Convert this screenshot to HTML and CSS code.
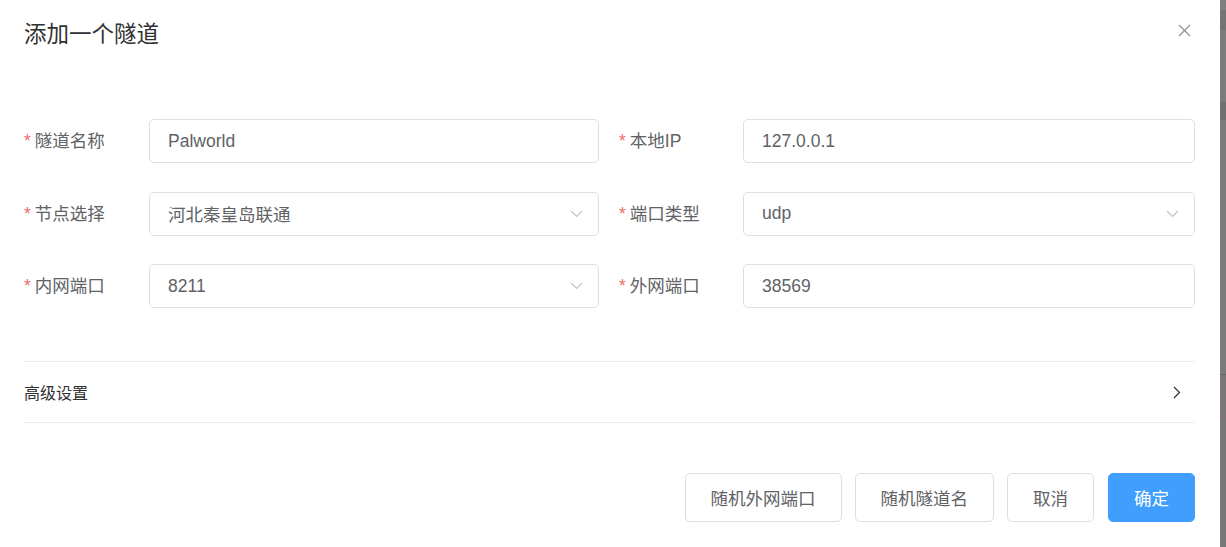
FILE: index.html
```html
<!DOCTYPE html>
<html lang="zh-CN">
<head>
<meta charset="utf-8">
<title>添加一个隧道</title>
<link rel="stylesheet" href="styles.css">
</head>
<body>
<div class="screen">
  <div class="dialog">
    <div class="dialog-header">
      <span class="dialog-title">添加一个隧道</span>
      <button class="close" aria-label="关闭">
        <svg width="13" height="13" viewBox="0 0 13 13"><path d="M1 1L12 12M12 1L1 12" stroke="#909399" stroke-width="1.3" fill="none"/></svg>
      </button>
    </div>
    <div class="dialog-body">
      <div class="form-grid">
        <div class="form-item">
          <label class="label"><span class="req">*</span>隧道名称</label>
          <div class="input"><span class="value">Palworld</span></div>
        </div>
        <div class="form-item">
          <label class="label"><span class="req">*</span>本地IP</label>
          <div class="input"><span class="value">127.0.0.1</span></div>
        </div>
        <div class="form-item">
          <label class="label"><span class="req">*</span>节点选择</label>
          <div class="input select"><span class="value">河北秦皇岛联通</span>
            <svg class="arrow" width="13" height="8" viewBox="0 0 13 8"><path d="M1 1L6.5 6.5L12 1" stroke="#c0c4cc" stroke-width="1.2" fill="none"/></svg>
          </div>
        </div>
        <div class="form-item">
          <label class="label"><span class="req">*</span>端口类型</label>
          <div class="input select"><span class="value">udp</span>
            <svg class="arrow" width="13" height="8" viewBox="0 0 13 8"><path d="M1 1L6.5 6.5L12 1" stroke="#c0c4cc" stroke-width="1.2" fill="none"/></svg>
          </div>
        </div>
        <div class="form-item">
          <label class="label"><span class="req">*</span>内网端口</label>
          <div class="input select"><span class="value">8211</span>
            <svg class="arrow" width="13" height="8" viewBox="0 0 13 8"><path d="M1 1L6.5 6.5L12 1" stroke="#c0c4cc" stroke-width="1.2" fill="none"/></svg>
          </div>
        </div>
        <div class="form-item">
          <label class="label"><span class="req">*</span>外网端口</label>
          <div class="input"><span class="value">38569</span></div>
        </div>
      </div>
      <div class="collapse">
        <div class="collapse-head">
          <span>高级设置</span>
          <svg width="8" height="13" viewBox="0 0 8 13"><path d="M1 1L6.5 6.5L1 12" stroke="#303133" stroke-width="1.2" fill="none"/></svg>
        </div>
      </div>
    </div>
    <div class="dialog-footer">
      <button class="btn">随机外网端口</button>
      <button class="btn">随机隧道名</button>
      <button class="btn">取消</button>
      <button class="btn primary">确定</button>
    </div>
  </div>
  <div class="backdrop">
    <div class="seg s1"></div>
    <div class="seg s2"></div>
    <div class="seg s3"></div>
    <div class="seg s4"></div>
    <div class="seg s5"></div>
    <div class="seg s6"></div>
    <div class="seg s7"></div>
  </div>
</div>
</body>
</html>
```

FILE: styles.css
```css
* { box-sizing: border-box; }
html, body { margin: 0; padding: 0; }
body {
  font-family: "Liberation Sans", "Noto Sans CJK SC", sans-serif;
  background: #fff;
  width: 1226px;
  height: 547px;
  overflow: hidden;
}
.screen {
  display: flex;
  height: 547px;
}
.dialog {
  width: 1220px;
  height: 547px;
  background: #fff;
  padding: 0 25px 0 24px;
}
.dialog-header {
  display: flex;
  justify-content: space-between;
  align-items: flex-start;
  padding-top: 23px;
  height: 48px;
}
.dialog-title {
  font-size: 22.5px;
  line-height: 24px;
  color: #303133;
}
.close {
  border: 0;
  background: none;
  padding: 0;
  margin: 1px 4px 0 0;
  width: 13px;
  height: 13px;
  display: flex;
}
.dialog-body {
  padding-top: 71px;
}
.form-grid {
  display: grid;
  grid-template-columns: 575px 576px;
  column-gap: 20px;
  row-gap: 28.5px;
}
.form-item {
  display: flex;
  align-items: center;
  height: 44px;
}
.label {
  width: 125px;
  flex: none;
  font-size: 17.5px;
  color: #606266;
  line-height: 44px;
}
.form-item:nth-child(2n) .label { width: 124px; }
.req {
  color: #f56c6c;
  margin-right: 4px;
}
.input {
  flex: 1;
  height: 44px;
  border: 1px solid #dcdfe6;
  border-radius: 5px;
  display: flex;
  align-items: center;
  padding: 0 15px 0 18px;
  font-size: 17.5px;
  color: #606266;
}
.input .value { flex: 1; }
.collapse {
  margin-top: 53px;
  border-top: 1px solid #ebeef5;
  border-bottom: 1px solid #ebeef5;
}
.collapse-head {
  height: 60px;
  display: flex;
  align-items: center;
  justify-content: space-between;
  font-size: 16px;
  color: #303133;
  padding-right: 14px;
}
.dialog-footer {
  display: flex;
  justify-content: flex-end;
  gap: 13px;
  margin-top: 50px;
}
.btn {
  height: 49px;
  padding: 0 25px;
  border: 1px solid #dcdfe6;
  border-radius: 5px;
  background: #fff;
  color: #606266;
  font-family: "Liberation Sans", "Noto Sans CJK SC", sans-serif;
  font-size: 17.5px;
}
.btn.primary {
  background: #409eff;
  border-color: #409eff;
  color: #fff;
  margin-left: 1px;
}
.backdrop {
  flex: 1;
  display: flex;
  flex-direction: column;
  background: #7b7b7b;
}
.seg { width: 100%; }
.s1 { height: 10px; background: #7f7f7f; }
.s2 { height: 20px; background: #747474; }
.s3 { height: 72px; background: #7c7c7c; }
.s4 { height: 18px; background: #707070; }
.s5 { height: 255px; background: #7b7b7b; border-bottom: 1px solid #666; }
.s6 { height: 45px; background: #7d7678; }
.s7 { flex: 1; background: #777; }
```
